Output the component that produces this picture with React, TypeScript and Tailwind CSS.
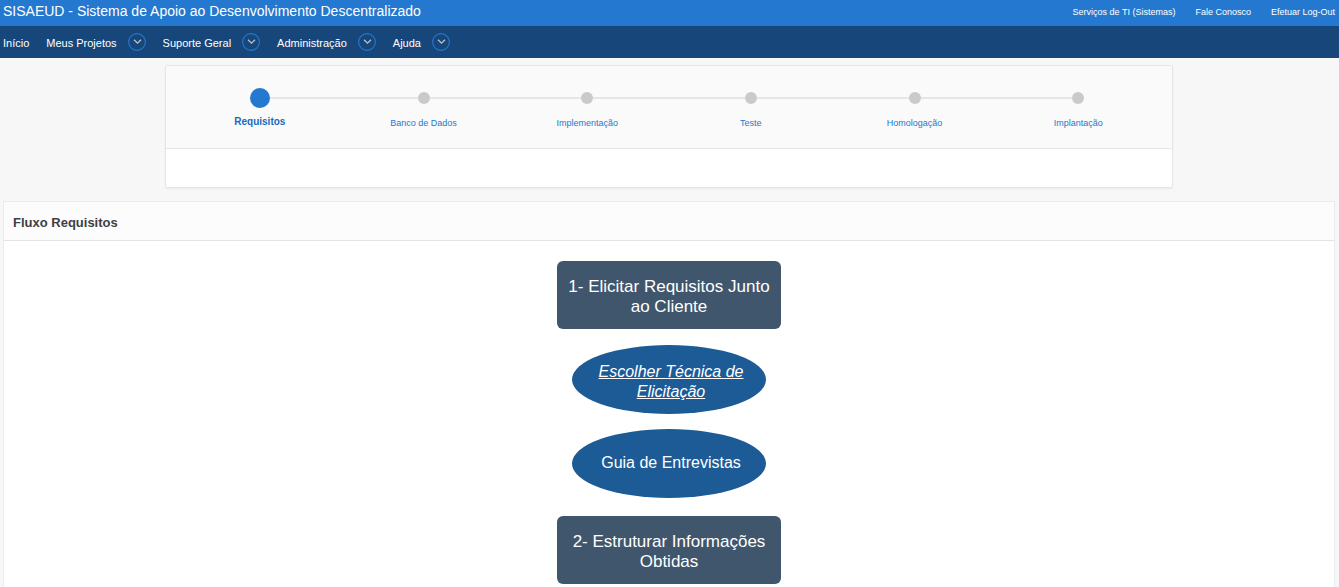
import React from "react";

const menus = ["Meus Projetos", "Suporte Geral", "Administração", "Ajuda"];
const links = ["Serviços de TI (Sistemas)", "Fale Conosco", "Efetuar Log-Out"];
const steps = ["Requisitos", "Banco de Dados", "Implementação", "Teste", "Homologação", "Implantação"];

function Chevron() {
  return (
    <svg viewBox="0 0 18 18" className="size-[18px]" fill="none" aria-hidden="true">
      <circle cx="9" cy="9" r="8.4" stroke="#2578cf" strokeWidth="1.1" />
      <path d="M6 6.8L9.5 10.2L13 6.8" stroke="#b4c4d3" strokeWidth="1.3" />
    </svg>
  );
}

function Step({ label, index }: { label: string; index: number }) {
  const active = index === 0;
  const last = index === steps.length - 1;
  return (
    <li className="flex flex-col items-center">
      <div className="flex h-5 w-full items-center">
        <span className={index === 0 ? "flex-1" : "h-0.5 flex-1 bg-[#e6e6e6]"} />
        <span className={active ? "size-5 rounded-full bg-[#2578cf]" : "size-3 rounded-full bg-[#cacaca]"} />
        <span className={last ? "flex-1" : "h-0.5 flex-1 bg-[#e6e6e6]"} />
      </div>
      <a
        href="#"
        aria-current={active ? "step" : undefined}
        className={
          active
            ? "mt-1.5 text-[10px] leading-4 font-bold text-[#1a69bd]"
            : "mt-1.5 pt-px text-[9px] leading-4 text-[#2578cf]"
        }
      >
        {label}
      </a>
    </li>
  );
}

function Stage({ title, children }: { title: string; children?: React.ReactNode }) {
  return (
    <section className="flex flex-col items-center gap-4">
      <h3 className="flex min-h-[68px] w-56 items-center justify-center rounded-md bg-[#40566d] px-2 pt-1 text-center text-[17px] leading-5 text-white">
        {title}
      </h3>
      {children && <div className="flex flex-col gap-[15px]">{children}</div>}
    </section>
  );
}

function Task({ children, linked }: { children: React.ReactNode; linked?: boolean }) {
  return (
    <a
      href="#"
      className={
        linked
          ? "flex min-h-[69px] w-[194px] items-center justify-center rounded-[50%] bg-[#1d5b96] pt-1 pr-4 pl-5 text-center text-base leading-5 text-white italic underline"
          : "flex min-h-[69px] w-[194px] items-center justify-center rounded-[50%] bg-[#1d5b96] pr-4 pb-0.5 pl-5 text-center text-base leading-5 text-white"
      }
    >
      {children}
    </a>
  );
}

export default function App() {
  return (
    <div className="min-h-screen bg-[#f7f7f7] font-['Liberation_Sans',Arial,sans-serif]">
      <header>
        <div className="flex h-[26px] items-center justify-between bg-[#2578cf] pr-1 pl-[3px] text-white">
          <h1 className="pb-1 text-[14px] leading-5">SISAEUD - Sistema de Apoio ao Desenvolvimento Descentralizado</h1>
          <nav aria-label="Serviços" className="flex gap-5 pb-0.5 text-[9px] leading-4">
            {links.map((l) => (
              <a key={l} href="#">{l}</a>
            ))}
          </nav>
        </div>
        <nav aria-label="Principal" className="flex h-8 items-center gap-[17px] bg-[#17477a] px-[3px] text-[11px] leading-4 text-white">
          <a href="#" className="pt-0.5">Início</a>
          {menus.map((m) => (
            <button key={m} type="button" className="flex items-center gap-[11px]">
              <span className="pt-0.5">{m}</span>
              <Chevron />
            </button>
          ))}
        </nav>
      </header>
      <main className="pt-[7px] pr-1 pb-5 pl-[3px]">
        <section className="mx-auto max-w-[1008px] rounded-xs border border-[#e6e6e6] bg-white shadow-xs">
          <ol className="grid grid-cols-6 border-b border-[#e6e6e6] bg-[#fafafa] px-3 pt-[22px] pb-[17px]">
            {steps.map((s, i) => (
              <Step key={s} label={s} index={i} />
            ))}
          </ol>
          <div className="h-[38px]" />
        </section>
        <section className="mt-[13px] border border-[#ebebeb] bg-white">
          <h2 className="border-b border-[#e3e3e3] bg-[#fcfcfc] px-[9px] pt-[11px] pb-[7px] text-[13px] leading-5 font-bold text-[#404040]">
            Fluxo Requisitos
          </h2>
          <div className="flex flex-col items-center gap-[18px] py-5">
            <Stage title="1- Elicitar Requisitos Junto ao Cliente">
              <Task linked>Escolher Técnica de Elicitação</Task>
              <Task>Guia de Entrevistas</Task>
            </Stage>
            <Stage title="2- Estruturar Informações Obtidas" />
          </div>
        </section>
      </main>
    </div>
  );
}
